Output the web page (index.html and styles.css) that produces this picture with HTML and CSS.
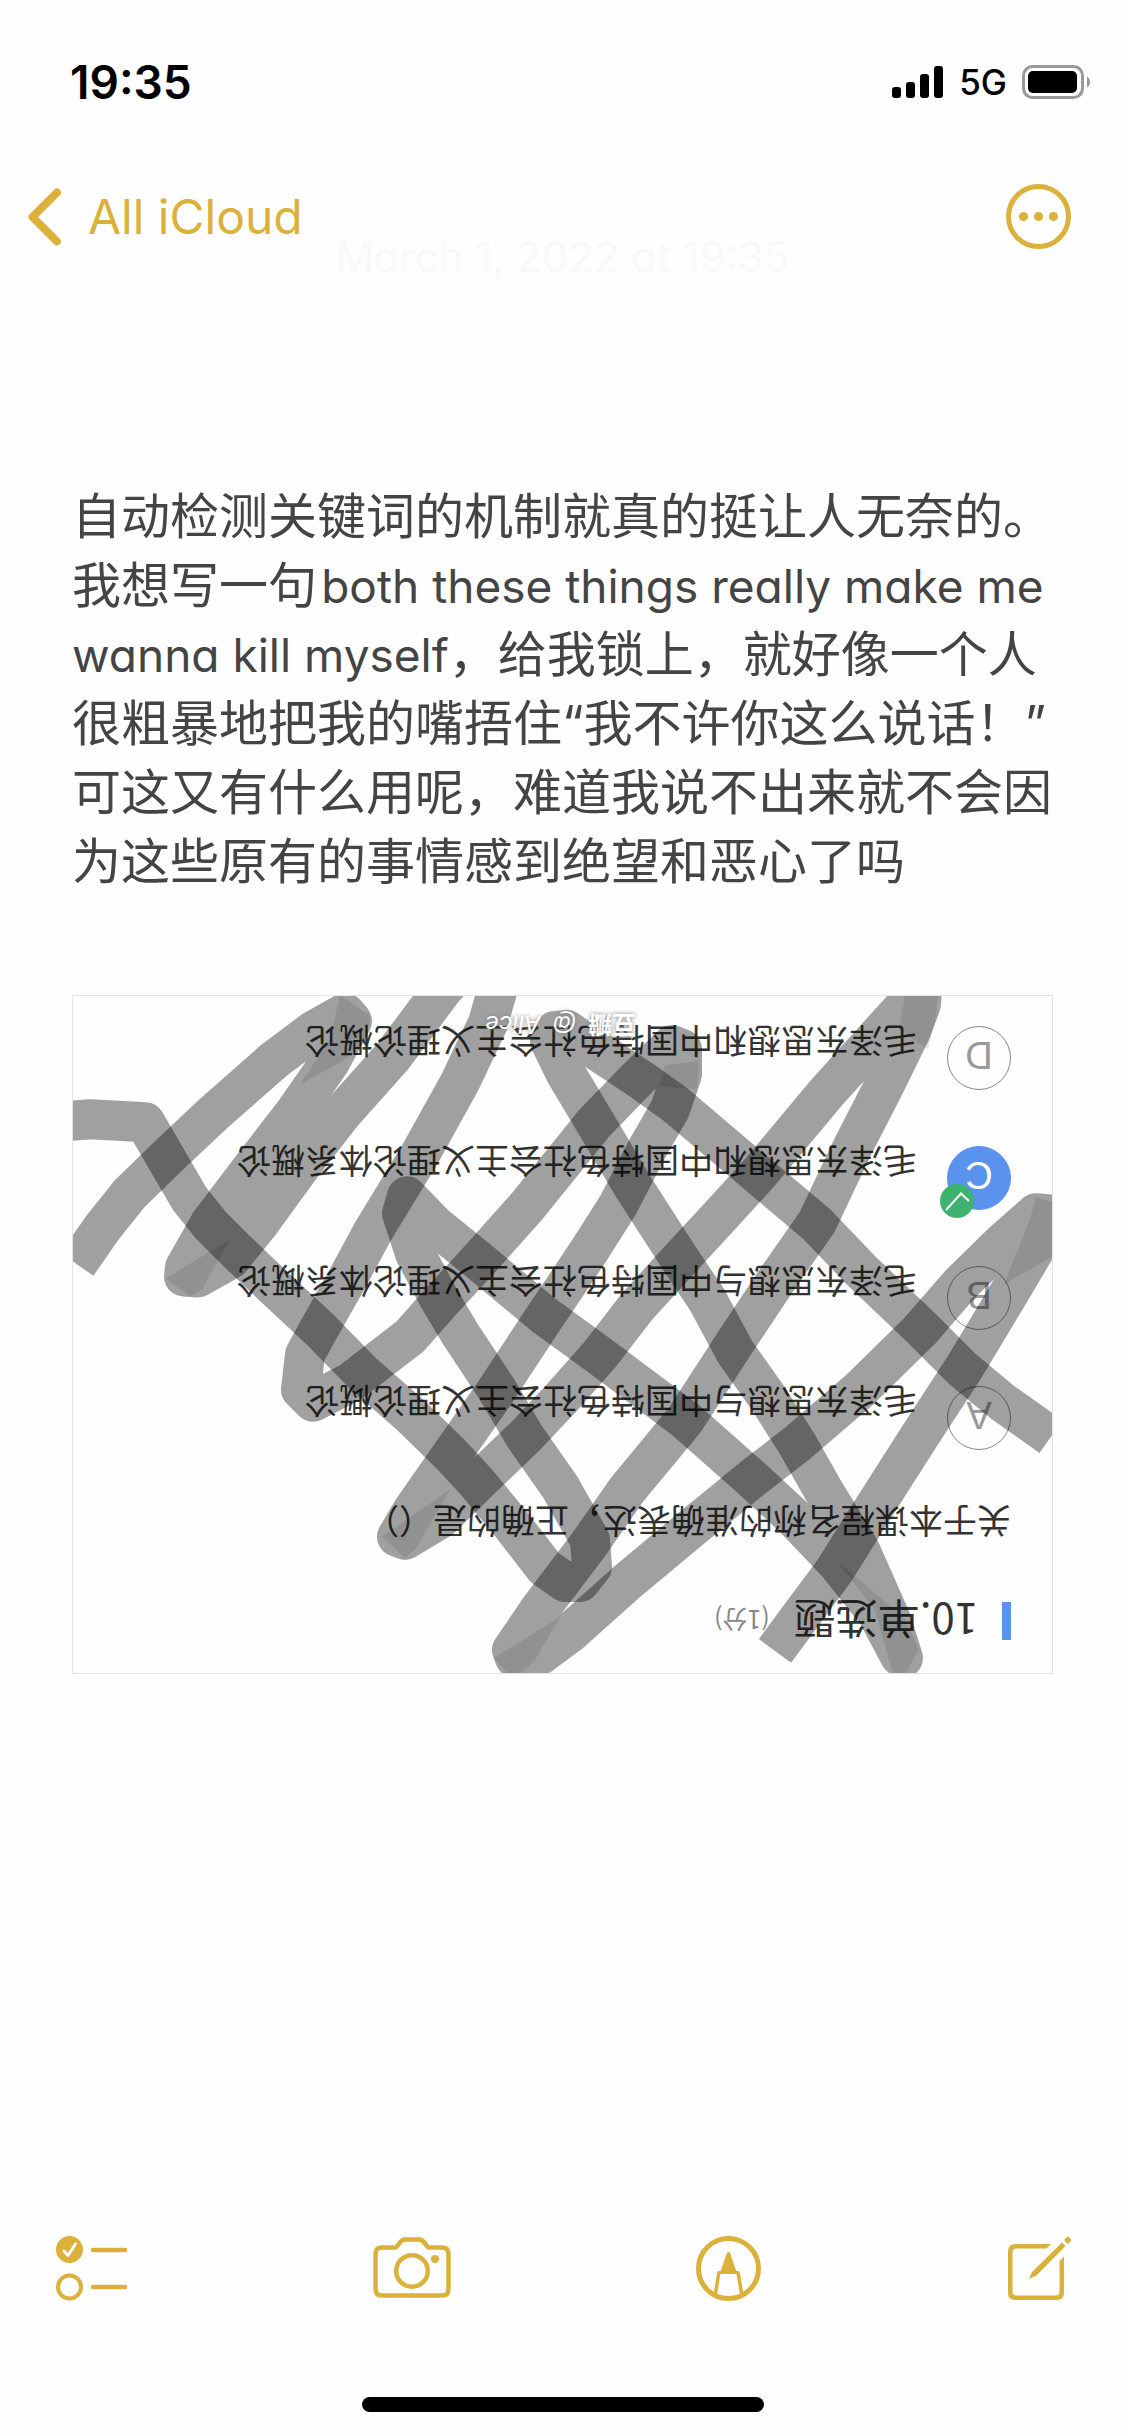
FILE: index.html
```html
<!DOCTYPE html>
<html lang="zh-CN">
<head>
<meta charset="utf-8">
<meta name="viewport" content="width=device-width, initial-scale=1">
<title>Notes</title>
<link rel="stylesheet" href="styles.css">
</head>
<body>
<div class="screen">
  <div class="status">
    <span class="status-time">19:35</span>
    <div class="status-right">
      <svg class="signal" width="52" height="34" viewBox="0 0 52 34" aria-hidden="true">
        <rect x="0" y="22" width="9" height="11" rx="3"/>
        <rect x="14" y="17" width="9" height="16" rx="3"/>
        <rect x="28" y="9" width="9" height="24" rx="3"/>
        <rect x="42" y="1" width="9" height="32" rx="3"/>
      </svg>
      <span class="status-net">5G</span>
      <svg class="battery" width="70" height="34" viewBox="0 0 70 34" aria-hidden="true">
        <rect x="1.500" y="1.500" width="59" height="31" rx="9" fill="none" stroke="#999" stroke-width="3"/>
        <rect x="6" y="6" width="49" height="22" rx="5"/>
        <path d="M65 11.500a6.500 6.500 0 0 1 0 11z" fill="#999"/>
      </svg>
    </div>
  </div>

  <nav class="nav">
    <a class="back" href="#folder">
      <svg width="34" height="58" viewBox="0 0 34 58" aria-hidden="true"><path d="M29 4.500 4.500 29 29 53.500" fill="none" stroke="currentColor" stroke-width="8" stroke-linecap="round" stroke-linejoin="round"/></svg>
      <span>All iCloud</span>
    </a>
    <button class="icon-button" type="button" aria-label="More">
      <svg width="65" height="65" viewBox="0 0 65 65" aria-hidden="true">
        <circle cx="32.500" cy="32.500" r="30" fill="none" stroke="currentColor" stroke-width="5"/>
        <g fill="currentColor"><circle cx="17.500" cy="32.500" r="4.500"/><circle cx="32.500" cy="32.500" r="4.500"/><circle cx="47.500" cy="32.500" r="4.500"/></g>
      </svg>
    </button>
  </nav>

  <main class="note">
    <p class="note-date">March 1, 2022 at 19:35</p>
    <p class="note-text">自动检测关键词的机制就真的挺让人无奈的。我想写一句<span class="latin" lang="en">&#8202;both these things really make me wanna kill myself</span>，给我锁上，就好像一个人很粗暴地把我的嘴捂住“我不许你这么说话！”可这又有什么用呢，难道我说不出来就不会因为这些原有的事情感到绝望和恶心了吗</p>

    <figure class="photo">
      <div class="quiz">
        <div class="quiz-head">
          <span class="quiz-bar"></span>
          <span class="quiz-title">10.单选题</span>
          <span class="quiz-score">(1分)</span>
        </div>
        <p class="quiz-question">关于本课程名称的准确表达，正确的是（）</p>
        <ul class="options">
          <li class="option"><span class="mark">A</span><span class="label">毛泽东思想与中国特色社会主义理论概论</span></li>
          <li class="option"><span class="mark">B</span><span class="label">毛泽东思想与中国特色社会主义理论体系概论</span></li>
          <li class="option"><span class="mark mark-on">C<svg class="badge" width="34" height="34" viewBox="0 0 34 34" aria-hidden="true"><circle cx="17" cy="17" r="17" fill="#3eb370"/><path d="M5 17l8 7.500L28 8" fill="none" stroke="#fff" stroke-width="2"/></svg></span><span class="label">毛泽东思想和中国特色社会主义理论体系概论</span></li>
          <li class="option"><span class="mark">D</span><span class="label">毛泽东思想和中国特色社会主义理论概论</span></li>
        </ul>
      </div>
      <svg class="scribble" viewBox="73 997 979 676" preserveAspectRatio="none" aria-hidden="true">
        <g fill="none" stroke="#000" stroke-width="40" stroke-linejoin="round">
          <path stroke-opacity=".37" d="M77 1265 102 1229 130 1194 166 1159 215 1113 273 1062 313 1032 345 1014 352 1022 330 1063 295 1113 254 1166 210 1224 185 1268 184 1277 198 1278 230 1260 260 1223 300 1168 343 1113 393 1057 443 990 470 960 502 975 488 1024 460 1083 420 1155 373 1232 347 1280 317 1333 305 1355 301 1390 313 1402 350 1383 410 1337 440 1303 477 1263 527 1207 570 1154 595 1123 640 1077 672 1046 682 1050 682 1075 670 1110 647 1150 618 1206 590 1250 560 1295 543 1320 497 1390 450 1457 413 1510 397 1537 405 1540 440 1519 477 1483 525 1437 560 1400 600 1355 637 1307 680 1260 717 1220 760 1173 827 1093 905 1007 922 990 921 1005 910 1034 885 1085 853 1147 817 1223 777 1280 735 1343 685 1420 627 1490 590 1543 540 1609 512 1650 515 1658 540 1655 570 1633 627 1582 693 1527 753 1478 797 1444 860 1390 920 1331 960 1285 1003 1243 1036 1214 1048 1215 1042 1238 1007 1297 983 1337 963 1370 927 1425 893 1478 860 1530 835 1570 800 1617 775 1651"/>
          <path stroke-opacity=".37" d="M68 1122 90 1120 145 1123 152 1135 166 1159 190 1200 210 1225 237 1252 277 1290 320 1330 362 1373 410 1415 450 1454 477 1483 510 1523 545 1568 565 1582 580 1582 592 1567 590 1540 560 1487 525 1437 497 1390 460 1334 438 1297 415 1254 402 1214 407 1197 435 1226 477 1260 543 1315 598 1355 685 1420 753 1480 793 1517 837 1563 877 1613 900 1656 903 1658 891 1620 860 1550 823 1490 797 1444 767 1397 735 1352 707 1300 680 1260 633 1187 595 1123 565 1073 550 1042 555 1032 567 1031 593 1049 640 1080 675 1105 720 1143 760 1177 817 1225 860 1270 922 1329 963 1370 1003 1403 1051 1437"/>
        </g>
        <g fill="#000" fill-opacity=".09">
          <path d="M340 996 370 1017 367 1040 346 1060 300 1085 330 1040z"/>
          <path d="M166 1279 230 1240 202 1290 190 1297z"/>
          <path d="M382 1537 450 1490 415 1550 405 1558z"/>
          <path d="M494 1658 560 1617 535 1660 520 1674 508 1674z"/>
          <path d="M899 1031 905 996 938 996 935 1024 928 1050z"/>
          <path d="M1030 1220 1036 1198 1053 1203 1053 1257 1004 1285z"/>
          <path d="M836 1560 875 1610 893 1674 905 1674 919 1650 906 1620z"/>
          <path d="M665 1066 699 1062 697 1090 660 1087z"/>
        </g>
      </svg>
      <figcaption class="watermark"><b>豆瓣</b><i>@</i><i>Alice</i></figcaption>
    </figure>
  </main>

  <footer class="footer">
    <div class="toolbar">
      <button class="icon-button" type="button" aria-label="Checklist">
        <svg width="71" height="65" viewBox="56 2236 71 65" aria-hidden="true">
          <circle cx="69.500" cy="2249.500" r="13.500" fill="currentColor"/>
          <path d="M64 2251l4 4.500 7.500-11.500" fill="none" stroke="#fefefe" stroke-width="3" stroke-linecap="round" stroke-linejoin="round"/>
          <circle cx="69.500" cy="2287" r="11.500" fill="none" stroke="currentColor" stroke-width="4"/>
          <path d="M93 2250h32M93 2287h32" stroke="currentColor" stroke-width="4.500" stroke-linecap="round"/>
        </svg>
      </button>
      <button class="icon-button" type="button" aria-label="Camera">
        <svg width="78" height="65" viewBox="373 2236 78 65" aria-hidden="true">
          <g fill="none" stroke="currentColor" stroke-width="4.500" stroke-linejoin="round">
            <path d="M382 2247.500h13c3 0 4-6 8.500-8h16.500c6 2 6 8 9.500 8h12.500q6.500 0 6.500 6.500v35q0 6.500-6.500 6.500h-60q-6.500 0-6.500-6.500v-35q0-6.500 6.500-6.500z"/>
            <circle cx="412" cy="2271" r="15.800"/>
          </g>
          <circle cx="435" cy="2259" r="4" fill="currentColor"/>
        </svg>
      </button>
      <button class="icon-button" type="button" aria-label="Markup">
        <svg width="65" height="65" viewBox="695.500 2236 65 65" aria-hidden="true">
          <circle cx="728" cy="2268.500" r="30" fill="none" stroke="currentColor" stroke-width="5"/>
          <path d="M728 2252q1.500 0 2 2l5 15 1 2h2.500l1 2.500 3.500 20.500-3.500 1-3.500-21h-16l-3.500 21-3.500-1 3.500-20.500 1-2.500h2.500l1-2 5-15q.5-2 2-2z" fill="currentColor"/>
        </svg>
      </button>
      <button class="icon-button" type="button" aria-label="New note">
        <svg width="65" height="65" viewBox="1007 2233 65 65" aria-hidden="true">
          <path d="M1051 2241l-4.500 4.500h-30q-4 0-4 4v39q0 4 4 4h39q4 0 4-4v-30.500l4.500-4.500v36q0 7.500-7.500 7.500h-41q-7.500 0-7.500-7.500v-41q0-7.500 7.500-7.500z" fill="currentColor"/>
          <path d="M1062 2239.500l3.500 3.500-29 29.500-7.500 3.500 3-7zM1064 2237l2.500-2.500q1.500-1.500 3.500.5t.5 3.500l-3 2.500z" fill="currentColor"/>
        </svg>
      </button>
    </div>
    <div class="home-indicator"></div>
  </footer>
</div>
</body>
</html>
```
FILE: styles.css
```css
* { box-sizing: border-box; }

body {
  margin: 0;
  background: #fefefe;
  color: #444;
  font-family: Inter, "Noto Sans CJK SC", sans-serif;
  font-feature-settings: "cv11";
}

p, ul, figure { margin: 0; padding: 0; }
ul { list-style: none; }
svg { display: block; flex: none; }

.screen {
  display: flex;
  flex-direction: column;
  min-height: 100vh;
}

/* Status bar */
.status {
  display: flex;
  align-items: center;
  justify-content: space-between;
  height: 164px;
  padding: 0 33px 0 70px;
  color: #000;
}
.status-time { font-size: 46px; font-weight: 600; }
.status-right { display: flex; align-items: center; gap: 15px; }
.status-net { font-size: 35px; font-weight: 500; }

/* Navigation */
.nav {
  display: flex;
  align-items: center;
  justify-content: space-between;
  padding: 20px 54px 0 28px;
}
.back {
  display: flex;
  align-items: center;
  gap: 26px;
  color: #dbb13b;
  font-size: 48px;
  line-height: 64px;
  text-decoration: none;
}
.icon-button {
  padding: 0;
  border: 0;
  background: none;
  color: #dbb13b;
}

/* Note */
.note { flex: 1; padding: 0 72px; }
.note-date {
  margin-top: -16px;
  color: #f9f9f9;
  font-size: 42px;
  line-height: 48px;
  text-align: center;
}
.note-text {
  margin-top: 201px;
  font-size: 49px;
  line-height: 69px;
}
.latin { font-size: 46px; line-height: 1; }

/* Upside-down photo of the quiz */
.photo {
  position: relative;
  margin-top: 99px;
  overflow: hidden;
  border: 1px solid #e4e4e4;
}
.quiz {
  padding: 24px 41px 22px;
  color: #333;
  font-family: "Noto Sans CJK SC", sans-serif;
  transform: rotate(180deg);
}
.quiz-head { display: flex; align-items: center; height: 56px; }
.quiz-bar { width: 9px; height: 38px; background: #5a93ee; }
.quiz-title { margin-left: 24px; font-size: 42px; line-height: 56px; }
.quiz-score { margin-left: 24px; color: #888; font-size: 25px; }
.quiz-question { margin-top: 47px; font-size: 34px; line-height: 48px; }
.options {
  display: flex;
  flex-direction: column;
  gap: 48px;
  margin-top: 48px;
}
.option { display: flex; gap: 30px; height: 72px; }
.mark {
  position: relative;
  flex: none;
  width: 64px;
  height: 64px;
  border: 1px solid #888;
  border-radius: 50%;
  color: #999;
  font-family: "Liberation Sans", sans-serif;
  font-size: 38px;
  line-height: 68px;
  text-align: center;
}
.mark-on { border-color: #5a93ee; background: #5a93ee; color: #fff; }
.badge { position: absolute; left: 36px; top: -9px; }
.label { margin-top: 24px; font-size: 34px; line-height: 48px; }
.scribble { position: absolute; inset: 0; width: 100%; height: 100%; }
.watermark {
  position: absolute;
  top: 10px;
  right: 416px;
  display: flex;
  align-items: center;
  gap: 12px;
  color: #fff;
  font-size: 24px;
  line-height: 36px;
  text-shadow: 0 0 4px #777;
  transform: rotate(180deg);
}

/* Bottom toolbar */
.toolbar {
  display: flex;
  justify-content: space-between;
  padding: 0 53px 0 56px;
}
.home-indicator {
  width: 402px;
  height: 15px;
  margin: 96px auto 24px;
  border-radius: 8px;
  background: #000;
}
```
